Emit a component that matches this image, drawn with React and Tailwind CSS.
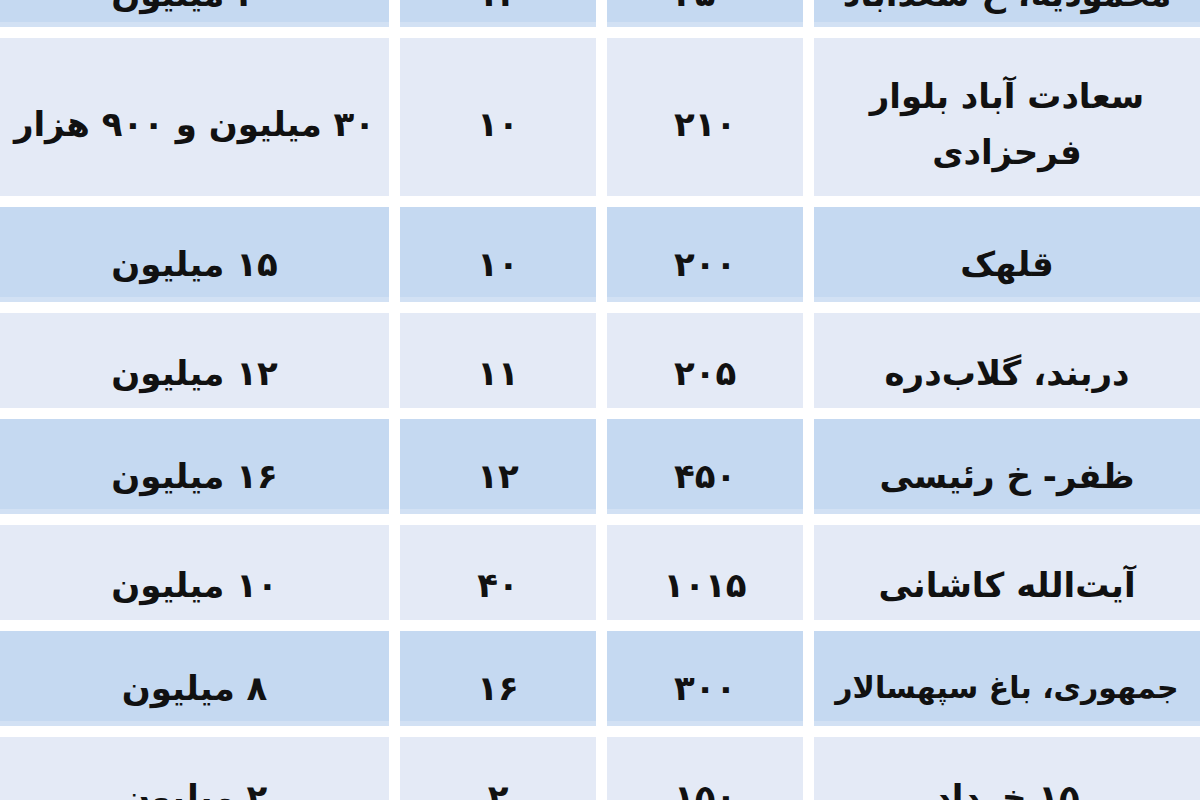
const rows = [
  { price: '۲۰ میلیون', age: '۱۲', area: '۲۵۰', place: 'محمودیه، خ سعدآباد', tone: 'blue', first: true },
  { price: '۳۰ میلیون و ۹۰۰ هزار', age: '۱۰', area: '۲۱۰', place: ['سعادت آباد بلوار', 'فرحزادی'], tone: 'light', tall: true },
  { price: '۱۵ میلیون', age: '۱۰', area: '۲۰۰', place: 'قلهک', tone: 'blue' },
  { price: '۱۲ میلیون', age: '۱۱', area: '۲۰۵', place: 'دربند، گلاب‌دره', tone: 'light' },
  { price: '۱۶ میلیون', age: '۱۲', area: '۴۵۰', place: 'ظفر- خ رئیسی', tone: 'blue' },
  { price: '۱۰ میلیون', age: '۴۰', area: '۱۰۱۵', place: 'آیت‌الله کاشانی', tone: 'light' },
  { price: '۸ میلیون', age: '۱۶', area: '۳۰۰', place: 'جمهوری، باغ سپهسالار', tone: 'blue', small: true },
  { price: '۲ میلیون', age: '۲', area: '۱۵۰', place: '۱۵ خرداد', tone: 'light' },
];

function Cell({ row, children }) {
  const tone =
    row.tone === 'blue'
      ? 'bg-[#c5d9f1] border-b-[5px] border-[#d2e1f4]'
      : 'bg-[#e4eaf6]';
  const pad = row.first ? 'pt-[34px]' : row.tall ? 'pt-[14px]' : 'pt-[24px]';
  return (
    <div className={`flex flex-col items-center justify-center whitespace-nowrap ${tone} ${pad}`}>
      {children}
    </div>
  );
}

export default function App() {
  return (
    <div
      dir="rtl"
      className="h-[800px] w-[1200px] overflow-hidden bg-white font-bold text-[#111] text-[34px] leading-[44px]"
      style={{ fontFamily: '"DejaVu Sans", sans-serif' }}
    >
      <div className="-mt-[68px] flex flex-col gap-[11px]">
        {rows.map((r, i) => (
          <div
            key={i}
            className={`grid grid-cols-[386px_196px_196px_389px] gap-x-[11px] ${r.tall ? 'h-[158px]' : 'h-[95px]'}`}
          >
            <Cell row={r}>
              {Array.isArray(r.place) ? (
                r.place.map((l) => (
                  <span key={l} className="leading-[56px]">
                    {l}
                  </span>
                ))
              ) : (
                <span className={r.small ? 'text-[30px]' : ''}>{r.place}</span>
              )}
            </Cell>
            <Cell row={r}>
              <span>{r.area}</span>
            </Cell>
            <Cell row={r}>
              <span>{r.age}</span>
            </Cell>
            <Cell row={r}>
              <span>{r.price}</span>
            </Cell>
          </div>
        ))}
      </div>
    </div>
  );
}
